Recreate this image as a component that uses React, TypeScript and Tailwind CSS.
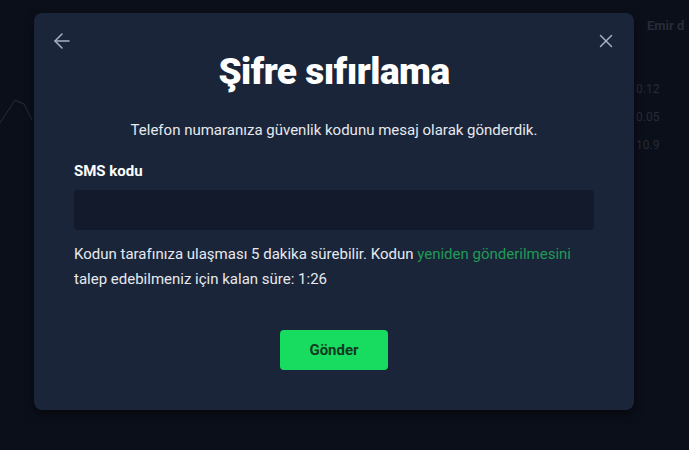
import { ArrowLeft, X } from 'lucide-react';

export default function App() {
  return (
    <div className="relative h-[450px] w-[689px] overflow-hidden bg-[#0b0f1a] font-['Roboto',sans-serif]">
      {/* Page behind the dialog, dimmed */}
      <div className="flex h-full">
        <div className="flex-1">
          <svg width="60" height="140" className="mt-[80px]">
            <path d="M0 43 L15 20 L24 24 L32 40" stroke="#262d3d" strokeWidth="1" fill="none" />
          </svg>
        </div>
        <div className="flex w-[53px] flex-col pt-[16px] text-[13px] text-[#262c38]">
          <div className="ml-[11px] font-bold">Emir d</div>
          <div className="mt-[44px] flex flex-col gap-[10px] text-[12px]">
            <span>0.12</span>
            <span>0.05</span>
            <span>10.9</span>
          </div>
        </div>
      </div>

      {/* Dialog */}
      <div className="absolute left-[34px] top-[13px] flex h-[397px] w-[600px] flex-col rounded-lg bg-[#1a2539] px-[40px] shadow-[0_4px_10px_rgba(0,0,0,0.5)]">
        <button className="absolute left-[16px] top-[16px] text-[#a9b3c4]">
          <ArrowLeft size={24} strokeWidth={1.5} />
        </button>
        <button className="absolute right-[17px] top-[17px] text-[#a9b3c4]">
          <X size={22} strokeWidth={1.5} />
        </button>

        <h1 className="mt-[37px] text-center text-[37px] font-black leading-[44px] tracking-[-0.5px] text-white">
          Şifre sıfırlama
        </h1>
        <p className="mt-[26px] text-center text-[15px] leading-[20px] text-[#e6e9ef]">
          Telefon numaranıza güvenlik kodunu mesaj olarak gönderdik.
        </p>

        <label className="mt-[22px] text-[15px] font-bold leading-[18px] text-white">SMS kodu</label>
        <input className="mt-[10px] h-[40px] w-full rounded bg-[#121a2b] px-3 text-[15px] text-white outline-none" />

        <p className="mt-[12px] text-[15px] leading-[25px] text-[#e6e9ef]">
          Kodun tarafınıza ulaşması 5 dakika sürebilir. Kodun{' '}
          <span className="text-[#1f9b57]">yeniden gönderilmesini</span> talep edebilmeniz için kalan süre: 1:26
        </p>

        <div className="mt-[38px] flex justify-center">
          <button className="h-[40px] w-[108px] rounded bg-[#17dc5f] text-[15px] font-bold text-[#123a22]">
            Gönder
          </button>
        </div>
      </div>
    </div>
  );
}
